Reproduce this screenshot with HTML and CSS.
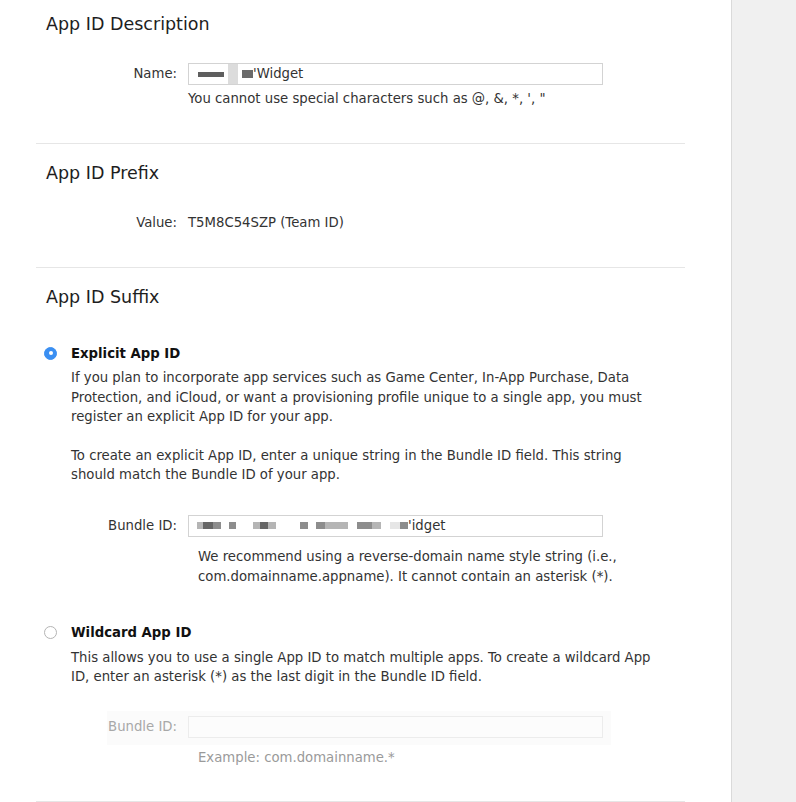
FILE: index.html
```html
<!DOCTYPE html>
<html lang="en">
<head>
<meta charset="utf-8">
<title>Register App ID</title>
<link rel="stylesheet" href="styles.css">
</head>
<body>
<div class="page">
  <main class="main">
    <section class="section sec-desc">
      <h2 class="sec-title">App ID Description</h2>
      <div class="form-row row-name">
        <label class="row-label">Name:</label>
        <div class="field">
          <span class="blur b-dark b-name1"></span><span class="blur b-tall"></span><span class="blur b-dark b-name2"></span><span class="field-text">'Widget</span>
        </div>
      </div>
      <p class="hint hint-name">You cannot use special characters such as @, &amp;, *, ', "</p>
    </section>

    <section class="section sec-prefix">
      <h2 class="sec-title">App ID Prefix</h2>
      <div class="form-row row-value">
        <span class="row-label">Value:</span>
        <span class="value-text">T5M8C54SZP (Team ID)</span>
      </div>
    </section>

    <section class="section sec-suffix">
      <h2 class="sec-title">App ID Suffix</h2>

      <div class="option opt-explicit">
        <div class="option-head">
          <span class="radio radio-on"></span>
          <span class="option-title">Explicit App ID</span>
        </div>
        <p class="option-text text-first">If you plan to incorporate app services such as Game Center, In-App Purchase, Data<br>Protection, and iCloud, or want a provisioning profile unique to a single app, you must<br>register an explicit App ID for your app.</p>
        <p class="option-text text-second">To create an explicit App ID, enter a unique string in the Bundle ID field. This string<br>should match the Bundle ID of your app.</p>
        <div class="form-row row-bundle">
          <label class="row-label">Bundle ID:</label>
          <div class="field field-bundle">
            <span class="blur g3 w6"></span><span class="blur g1 w10"></span><span class="blur g2 w8"></span><span class="gap w8"></span><span class="blur g2 w7"></span><span class="gap w17"></span><span class="blur g3 w7"></span><span class="blur g1 w8"></span><span class="blur g3 w8"></span><span class="gap w24"></span><span class="blur g2 w8"></span><span class="gap w8"></span><span class="blur g2 w9"></span><span class="blur g3 w23"></span><span class="gap w9"></span><span class="blur g2 w15"></span><span class="blur g3 w9"></span><span class="gap w9"></span><span class="blur g4 w10"></span><span class="blur g2 w8"></span><span class="field-text">'idget</span>
          </div>
        </div>
        <p class="hint hint-bundle">We recommend using a reverse-domain name style string (i.e.,<br>com.domainname.appname). It cannot contain an asterisk (*).</p>
      </div>

      <div class="option opt-wildcard">
        <div class="option-head">
          <span class="radio"></span>
          <span class="option-title">Wildcard App ID</span>
        </div>
        <p class="option-text text-first">This allows you to use a single App ID to match multiple apps. To create a wildcard App<br>ID, enter an asterisk (*) as the last digit in the Bundle ID field.</p>
        <div class="disabled-box">
          <div class="form-row row-disabled">
            <label class="row-label">Bundle ID:</label>
            <div class="field field-disabled"></div>
          </div>
        </div>
        <p class="hint hint-example">Example: com.domainname.*</p>
      </div>
    </section>
  </main>
  <aside class="sidebar"></aside>
</div>
</body>
</html>
```

FILE: styles.css
```css
* { box-sizing: border-box; }

html, body {
  margin: 0;
  padding: 0;
  background: #ffffff;
}

body {
  font-family: "DejaVu Sans", "Liberation Sans", sans-serif;
  font-size: 13.25px;
  color: #333333;
}

.page {
  display: flex;
  min-height: 802px;
}

.main {
  width: 731px;
  padding-left: 36px;
  background: #ffffff;
}

.sidebar {
  flex: 1;
  background: #f0f0f0;
  border-left: 1px solid #dadada;
}

.section {
  width: 649px;
  border-bottom: 1px solid #e6e6e6;
}

.sec-title {
  margin: 0;
  padding-left: 10px;
  font-size: 17.5px;
  font-weight: normal;
  line-height: 24px;
  color: #1e1e1e;
}

.sec-desc { padding: 12px 0 34px; }
.sec-prefix { padding: 17px 0 33px; }
.sec-suffix { padding: 17px 0 33px; }

.form-row {
  display: grid;
  grid-template-columns: 141px 415px;
  column-gap: 11px;
  align-items: center;
}

.row-label {
  text-align: right;
  line-height: 22px;
  color: #333333;
}

.row-name { margin-top: 27px; }
.row-value { margin-top: 27px; line-height: 20px; }

.field {
  height: 22px;
  border: 1px solid #d3d3d3;
  background: #ffffff;
  display: flex;
  align-items: center;
  padding-left: 8px;
  overflow: hidden;
}

.field-text {
  color: #333333;
  line-height: 20px;
}

.blur {
  display: inline-block;
  height: 7px;
}

.b-dark { background: #5e5e5e; height: 5px; }
.b-name1 { width: 26px; margin-left: 1px; }
.b-name2 { width: 11px; background: #6a6a6a; height: 8px; }
.b-tall {
  width: 10px;
  height: 24px;
  margin: 0 4px;
  background: #dcdcdc;
}

.gap { display: inline-block; height: 7px; }
.g1 { background: #666666; }
.g2 { background: #8d8d8d; }
.g3 { background: #b5b5b5; }
.g4 { background: #e6e6e6; }
.w6 { width: 6px; }
.w7 { width: 7px; }
.w8 { width: 8px; }
.w9 { width: 9px; }
.w10 { width: 10px; }
.w15 { width: 15px; }
.w17 { width: 17px; }
.w23 { width: 23px; }
.w24 { width: 24px; }

.hint {
  margin: 0;
  padding-left: 162px;
  line-height: 20px;
}

.hint-name { margin-top: 4px; padding-left: 152px; }
.hint-bundle { margin-top: 10px; }
.hint-example { margin-top: 3px; color: #9a9a9a; }

.option-head {
  display: flex;
  align-items: center;
  height: 20px;
  padding-left: 8px;
}

.opt-explicit { margin-top: 34px; }
.opt-wildcard { margin-top: 36px; }

.radio {
  width: 13px;
  height: 13px;
  border-radius: 50%;
  border: 1px solid #b4b4b4;
  background: #ffffff;
  margin-right: 14px;
  position: relative;
}

.radio-on {
  border-color: #3a8ff2;
  background: #3a8ff2;
}

.radio-on::after {
  content: "";
  position: absolute;
  left: 3.5px;
  top: 3.5px;
  width: 4px;
  height: 4px;
  border-radius: 50%;
  background: #ffffff;
}

.option-title {
  font-weight: bold;
  color: #111111;
}

.option-text {
  margin: 0;
  padding-left: 35px;
  line-height: 19.5px;
  color: #333333;
}

.text-first { margin-top: 5px; }
.text-second { margin-top: 19px; }

.row-bundle { margin-top: 30px; }

.disabled-box {
  margin-top: 24px;
  margin-left: 71px;
  width: 504px;
  padding: 5px 0 7px;
  background: #fbfbfb;
}

.row-disabled {
  grid-template-columns: 70px 415px;
}

.row-disabled .row-label { color: #a8a8a8; }

.field-disabled {
  border-color: #ececec;
  background: #fcfcfc;
}
```
